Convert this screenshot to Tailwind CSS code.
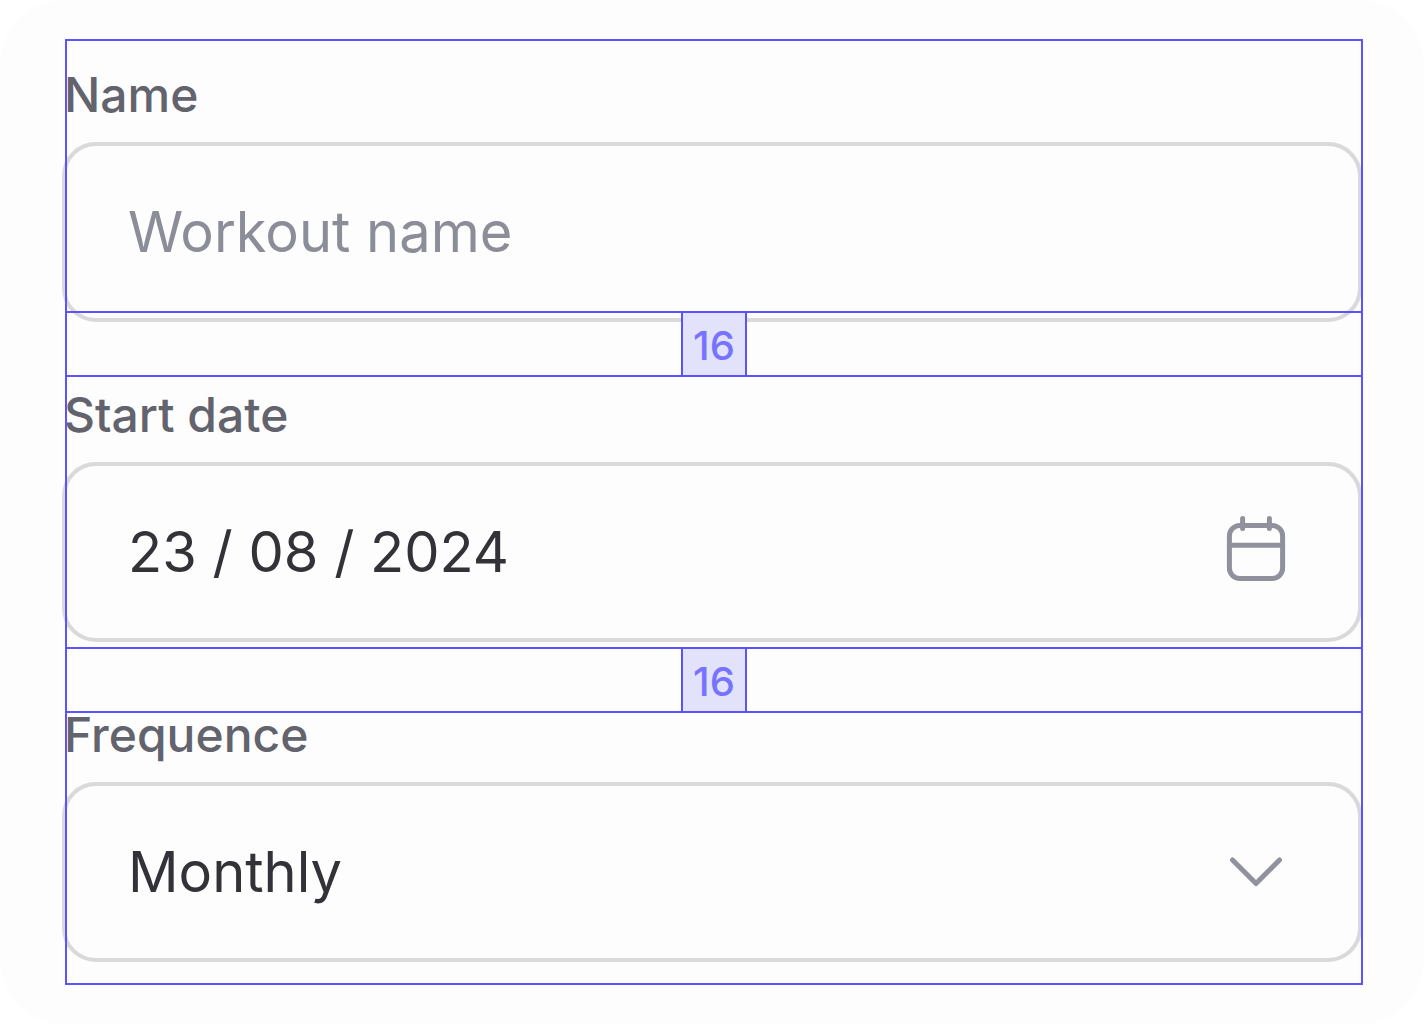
<!DOCTYPE html>
<html lang="en">
<head>
<meta charset="utf-8">
<meta name="viewport" content="width=device-width, initial-scale=1">
<title>Workout form</title>
<script src="https://cdn.jsdelivr.net/npm/@tailwindcss/browser@4"></script>
</head>
<body class="bg-white font-['Inter',sans-serif]">
<main class="relative min-h-screen rounded-[64px] bg-[#fdfdfd] p-[62px]">
  <form class="flex flex-col gap-[60px]">
    <div class="flex flex-col gap-[14px]">
      <label for="name" class="pl-[2px] text-[48px] leading-[66px] font-medium text-[#62636c]">Name</label>
      <input id="name" type="text" placeholder="Workout name" class="h-[180px] w-full rounded-[34px] border-4 border-[#d9d9da] bg-transparent px-[62px] text-[56px] text-[#323238] placeholder:text-[#8b8d98]">
    </div>
    <div class="flex flex-col gap-[14px]">
      <label for="date" class="pl-[2px] text-[48px] leading-[66px] font-medium text-[#62636c]">Start date</label>
      <div class="flex h-[180px] items-center rounded-[34px] border-4 border-[#d9d9da] pr-[62px]">
        <input id="date" type="text" value="23 / 08 / 2024" class="h-full min-w-0 flex-1 bg-transparent pl-[62px] text-[56px] text-[#323238]">
        <button type="button" aria-label="Open calendar" class="size-20 shrink-0">
          <svg viewBox="0 0 80 80" class="size-20" fill="none" stroke="#8f919c" stroke-width="5" stroke-linecap="round" aria-hidden="true">
            <rect x="13.4" y="13.4" width="53.2" height="53.2" rx="10.5"/>
            <path d="M26.6 6.5v10M53.4 6.5v10M13.4 33.3h53.2"/>
          </svg>
        </button>
      </div>
    </div>
    <div class="flex flex-col gap-[14px]">
      <label for="frequence" class="pl-[2px] text-[48px] leading-[66px] font-medium text-[#62636c]">Frequence</label>
      <div class="grid h-[180px] items-center rounded-[34px] border-4 border-[#d9d9da]">
        <select id="frequence" class="col-start-1 row-start-1 h-full w-full appearance-none bg-transparent px-[62px] text-[56px] text-[#323238]">
          <option>Monthly</option>
          <option>Weekly</option>
          <option>Daily</option>
        </select>
        <svg viewBox="0 0 80 80" class="pointer-events-none col-start-1 row-start-1 mr-[62px] size-20 justify-self-end" fill="none" stroke="#8f919c" stroke-width="5" stroke-linecap="round" stroke-linejoin="round" aria-hidden="true">
          <path d="M16.5 28L40 51.5L63.5 28"/>
        </svg>
      </div>
    </div>
  </form>

  <!-- Spacing guides laid over the form -->
  <div class="pointer-events-none absolute top-[39px] right-[61px] left-[65px] flex flex-col border-2 border-[#5b53ff]">
    <div class="h-[270px]"></div>
    <div class="flex h-[66px] justify-center border-y-2 border-[#5b53ff]">
      <span class="flex w-[66px] items-center justify-center border-x-2 border-[#5b53ff] bg-[#e2e2fb] pt-1 text-[40px] leading-none font-medium text-[#7773ff]">16</span>
    </div>
    <div class="h-[270px]"></div>
    <div class="flex h-[66px] justify-center border-y-2 border-[#5b53ff]">
      <span class="flex w-[66px] items-center justify-center border-x-2 border-[#5b53ff] bg-[#e2e2fb] pt-1 text-[40px] leading-none font-medium text-[#7773ff]">16</span>
    </div>
    <div class="h-[270px]"></div>
  </div>
</main>
</body>
</html>
